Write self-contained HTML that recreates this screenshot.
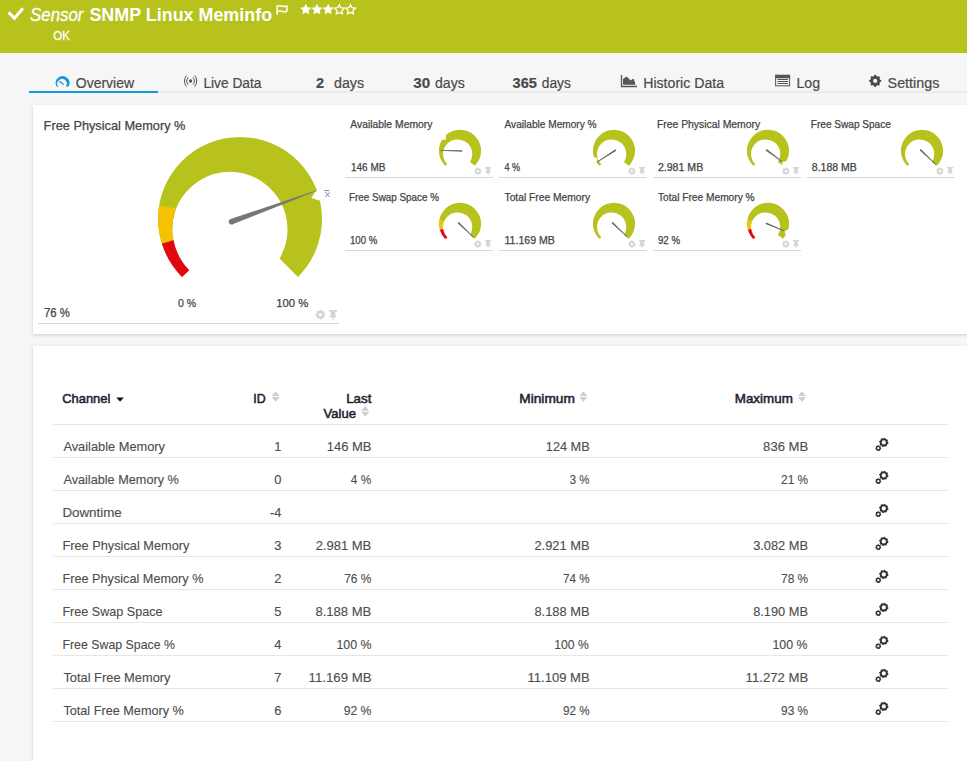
<!DOCTYPE html>
<html><head><meta charset="utf-8">
<style>
html,body{margin:0;padding:0;width:967px;height:761px;overflow:hidden;background:#f6f6f6;font-family:"Liberation Sans",sans-serif;}
.a{position:absolute;white-space:nowrap;line-height:1;}
svg.a{overflow:visible}
.w{color:#fff;}
.tab{color:#4a4a4a;-webkit-text-stroke:0.2px #4a4a4a;}
.panel{position:absolute;background:#fff;box-shadow:0 1px 3px rgba(0,0,0,0.17);}
.g{color:#444;-webkit-text-stroke:0.25px #444;}
.th{color:#1b2230;-webkit-text-stroke:0.5px #1b2230;}
.td{color:#4d4d4d;-webkit-text-stroke:0.12px #4d4d4d;}
.hl{position:absolute;height:1px;}
</style></head><body>

<div class="a" style="left:0;top:0;width:967px;height:53px;background:#b7c21d"></div>
<svg class="a" style="left:0;top:0" width="967" height="52"><path d="M8.6 12.4 L14.5 18.3 L22.9 8.2" stroke="#fff" stroke-width="3" fill="none" stroke-linecap="butt"/><path d="M277.1 5.2 V14.7" stroke="#fff" stroke-width="1.6"/><path d="M277.8 6 C280.5 4.5 282.5 7.8 286.9 6 V11.3 C282.5 13.1 280.5 9.8 277.8 11.3" stroke="#fff" stroke-width="1.5" fill="none"/></svg>
<svg class="a" style="left:0;top:0" width="967" height="52"><polygon points="305.80,3.70 307.50,7.25 311.41,7.78 308.56,10.50 309.27,14.37 305.80,12.50 302.33,14.37 303.04,10.50 300.19,7.78 304.10,7.25" fill="#fff"/><polygon points="316.98,3.70 318.68,7.25 322.59,7.78 319.74,10.50 320.45,14.37 316.98,12.50 313.51,14.37 314.22,10.50 311.37,7.78 315.28,7.25" fill="#fff"/><polygon points="328.16,3.70 329.86,7.25 333.77,7.78 330.92,10.50 331.63,14.37 328.16,12.50 324.69,14.37 325.40,10.50 322.55,7.78 326.46,7.25" fill="#fff"/><polygon points="339.34,4.70 340.87,7.70 344.19,8.22 341.81,10.60 342.34,13.93 339.34,12.40 336.34,13.93 336.87,10.60 334.49,8.22 337.81,7.70" fill="none" stroke="#fff" stroke-width="1.3"/><polygon points="350.52,4.70 352.05,7.70 355.37,8.22 352.99,10.60 353.52,13.93 350.52,12.40 347.52,13.93 348.05,10.60 345.67,8.22 348.99,7.70" fill="none" stroke="#fff" stroke-width="1.3"/></svg>
<div id="t0" class="a w" style="left:31.00px;top:5.86px;font-size:18.6px;font-style:italic;-webkit-text-stroke:0.3px #fff;transform-origin:1.00px 0;transform:translateX(-1.00px) scaleX(0.9051);">Sensor</div>
<div id="t1" class="a w" style="left:90.40px;top:5.70px;font-size:18.9px;font-weight:bold;transform-origin:0.61px 0;transform:translateX(-0.60px) scaleX(0.9476);">SNMP Linux Meminfo</div>
<div id="t2" class="a w" style="left:54.20px;top:29.73px;font-size:12.6px;-webkit-text-stroke:0.3px #fff;transform-origin:0.81px 0;transform:translateX(-0.80px) scaleX(0.9118);">OK</div>
<div class="hl" style="left:29px;top:91px;width:938px;height:2px;background:#ebebeb"></div>
<div class="a" style="left:29px;top:91px;width:129px;height:2px;background:#109ad7"></div>
<div id="t3" class="a tab" style="left:75.80px;top:76.05px;font-size:14px;;transform-origin:0.20px 0;transform:translateX(-0.20px) scaleX(0.9983);">Overview</div>
<div id="t4" class="a tab" style="left:204.40px;top:76.05px;font-size:14px;;transform-origin:0.61px 0;transform:translateX(-0.60px) scaleX(0.9814);">Live Data</div>
<div id="t5" class="a tab" style="left:316.00px;top:76.05px;font-size:14px;font-weight:bold;transform-origin:0.00px 0;transform:translateX(0.00px) scaleX(1.0375);">2</div>
<div id="t6" class="a tab" style="left:334.00px;top:76.05px;font-size:14px;;transform-origin:0.00px 0;transform:translateX(0.00px) scaleX(1.0138);">days</div>
<div id="t7" class="a tab" style="left:413.30px;top:76.05px;font-size:14px;font-weight:bold;transform-origin:-0.30px 0;transform:translateX(0.30px) scaleX(1.0800);">30</div>
<div id="t8" class="a tab" style="left:435.00px;top:76.05px;font-size:14px;;transform-origin:0.00px 0;transform:translateX(0.00px) scaleX(1.0069);">days</div>
<div id="t9" class="a tab" style="left:512.60px;top:76.05px;font-size:14px;font-weight:bold;transform-origin:0.41px 0;transform:translateX(-0.40px) scaleX(1.0391);">365</div>
<div id="t10" class="a tab" style="left:541.80px;top:76.05px;font-size:14px;;transform-origin:0.20px 0;transform:translateX(-0.20px) scaleX(0.9828);">days</div>
<div id="t11" class="a tab" style="left:644.20px;top:76.05px;font-size:14px;;transform-origin:0.81px 0;transform:translateX(-0.80px) scaleX(1.0100);">Historic Data</div>
<div id="t12" class="a tab" style="left:796.50px;top:76.05px;font-size:14px;;transform-origin:0.50px 0;transform:translateX(-0.50px) scaleX(1.0091);">Log</div>
<div id="t13" class="a tab" style="left:887.60px;top:76.05px;font-size:14px;;transform-origin:0.41px 0;transform:translateX(-0.40px) scaleX(1.0220);">Settings</div>
<svg class="a" style="left:0;top:60px" width="967" height="35" viewBox="0 60 967 35"><path d="M56.54 86.50 A7.0 7.0 0 1 1 68.66 86.50 L65.85 86.40 A4.7 4.7 0 1 0 58.40 86.72 Z" fill="#109ad7"/><path d="M59.3 81.2 L63.6 84.6" stroke="#109ad7" stroke-width="1.3"/><circle cx="190.6" cy="81" r="1.7" fill="#555"/><path d="M188.2 77.5 A5.36 5.36 0 0 0 188.2 84.5 M193 77.5 A5.36 5.36 0 0 1 193 84.5" stroke="#555" stroke-width="1" fill="none"/><path d="M186.5 75.5 A8.56 8.56 0 0 0 186.5 86.5 M194.7 75.5 A8.56 8.56 0 0 1 194.7 86.5" stroke="#555" stroke-width="1" fill="none"/><path d="M621.5 75 V86.5 H637" stroke="#555" stroke-width="1.3" fill="none"/><path d="M623 84.7 V79 L626.5 76.4 L630.8 80.6 L633.6 78.4 L635.6 84.7 Z" fill="#555"/><rect x="775.6" y="75.2" width="14" height="10.6" fill="none" stroke="#555" stroke-width="1"/><rect x="775.3" y="75" width="14.6" height="3.3" fill="#555"/><path d="M777.5 79.5 H788 M777.5 81.5 H788 M777.5 83.5 H788" stroke="#555" stroke-width="1"/></svg>
<svg class="a" style="left:0;top:0" width="967" height="761"><path d="M881.27,80.30 L881.27,81.50 L879.89,82.32 L879.52,83.21 L879.91,84.77 L879.07,85.62 L877.51,85.22 L876.62,85.59 L875.80,86.97 L874.60,86.97 L873.78,85.59 L872.89,85.22 L871.33,85.61 L870.48,84.77 L870.88,83.21 L870.51,82.32 L869.13,81.50 L869.13,80.30 L870.51,79.48 L870.88,78.59 L870.49,77.03 L871.33,76.18 L872.89,76.58 L873.78,76.21 L874.60,74.83 L875.80,74.83 L876.62,76.21 L877.51,76.58 L879.07,76.19 L879.92,77.03 L879.52,78.59 L879.89,79.48 Z M877.30,80.90 A2.1,2.1 0 1 0 873.10,80.90 A2.1,2.1 0 1 0 877.30,80.90 Z" fill="#4a4a4a" fill-rule="evenodd"/></svg>
<div class="panel" style="left:33px;top:105px;width:960px;height:229px"></div>
<div id="t14" class="a g" style="left:43.60px;top:119.85px;font-size:12.7px;;transform-origin:0.41px 0;transform:translateX(-0.40px) scaleX(1.0057);">Free Physical Memory %</div>
<div id="t15" class="a g" style="left:43.90px;top:306.93px;font-size:12.6px;;transform-origin:0.11px 0;transform:translateX(-0.10px) scaleX(0.9000);">76 %</div>
<div id="t16" class="a g" style="left:177.90px;top:297.55px;font-size:11.4px;;transform-origin:0.11px 0;transform:translateX(-0.10px) scaleX(0.9250);">0 %</div>
<div id="t17" class="a g" style="left:277.20px;top:297.55px;font-size:11.4px;;transform-origin:0.81px 0;transform:translateX(-0.80px) scaleX(0.9935);">100 %</div>
<div class="hl" style="left:38px;top:323px;width:301px;background:#d8d8d8"></div>
<svg class="a" style="left:0;top:0" width="967" height="761"><path d="M182.02 276.98 A82 82 0 1 1 297.98 276.98 L279.6 258.6 A57.6 57.6 0 1 0 189.2 270.2 Z" fill="#b7c21d"/><path d="M182.02 276.98 A82 82 0 0 1 161.9 243.6 L173.5 240 A57.6 57.6 0 0 0 189.2 270.2 Z" fill="#e30613"/><path d="M161.9 243.6 A82 82 0 0 1 159.2 205.6 L175.6 208.2 A57.6 57.6 0 0 0 173.5 240 Z" fill="#f5c200"/><polygon points="316.8,189.6 311.2,198 321,201 327,198 325,188" fill="#fff"/><polygon points="232.56,224.33 317.09,190.73 316.91,190.27 230.64,219.07" fill="#767676"/><circle cx="231.6" cy="221.7" r="2.8" fill="#767676"/></svg>
<svg class="a" style="left:0;top:0" width="967" height="761"><path d="M324.3 190.6 H329.2 M325.4 192.3 L329.6 197 M329.6 192.3 L325.4 197" stroke="#6f7590" stroke-width="0.9" fill="none"/></svg>
<svg class="a" style="left:0;top:0" width="967" height="761"><path d="M325.38,314.21 L325.38,315.19 L324.23,315.86 L323.93,316.59 L324.26,317.87 L323.57,318.57 L322.28,318.23 L321.56,318.53 L320.89,319.68 L319.91,319.68 L319.24,318.53 L318.51,318.23 L317.23,318.56 L316.53,317.87 L316.87,316.58 L316.57,315.86 L315.42,315.19 L315.42,314.21 L316.57,313.54 L316.87,312.81 L316.54,311.53 L317.23,310.83 L318.52,311.17 L319.24,310.87 L319.91,309.72 L320.89,309.72 L321.56,310.87 L322.29,311.17 L323.57,310.84 L324.27,311.53 L323.93,312.82 L324.23,313.54 Z M322.00,314.70 A1.6,1.6 0 1 0 318.80,314.70 A1.6,1.6 0 1 0 322.00,314.70 Z" fill="#d5d5d5" fill-rule="evenodd"/><path d="M329.20 310.10 H336.80 V312.02 H335.28 V315.38 L336.80 317.40 H329.20 L330.72 315.38 V312.02 H329.20 Z M332.39 317.40 H333.61 V319.70 H332.39 Z" fill="#d5d5d5"/></svg>
<div id="t18" class="a g" style="left:350.30px;top:119.80px;font-size:10.4px;;transform-origin:-0.30px 0;transform:translateX(0.30px) scaleX(0.9964);">Available Memory</div>
<div id="t19" class="a g" style="left:350.80px;top:163.07px;font-size:10.2px;;transform-origin:0.20px 0;transform:translateX(-0.10px) scaleX(0.9829);">146 MB</div>
<div class="hl" style="left:345px;top:177px;width:148px;background:#d8d8d8"></div>
<div id="t20" class="a g" style="left:504.30px;top:119.80px;font-size:10.4px;;transform-origin:-0.30px 0;transform:translateX(0.50px) scaleX(0.9747);">Available Memory %</div>
<div id="t21" class="a g" style="left:504.80px;top:163.07px;font-size:10.2px;;transform-origin:0.20px 0;transform:translateX(-0.50px) scaleX(0.8941);">4 %</div>
<div class="hl" style="left:499px;top:177px;width:148px;background:#d8d8d8"></div>
<div id="t22" class="a g" style="left:658.30px;top:119.80px;font-size:10.4px;;transform-origin:0.70px 0;transform:translateX(-1.10px) scaleX(0.9990);">Free Physical Memory</div>
<div id="t23" class="a g" style="left:658.80px;top:163.07px;font-size:10.2px;;transform-origin:0.20px 0;transform:translateX(-1.10px) scaleX(1.0395);">2.981 MB</div>
<div class="hl" style="left:653px;top:177px;width:148px;background:#d8d8d8"></div>
<div id="t24" class="a g" style="left:812.30px;top:119.80px;font-size:10.4px;;transform-origin:0.70px 0;transform:translateX(-1.20px) scaleX(0.9683);">Free Swap Space</div>
<div id="t25" class="a g" style="left:812.80px;top:163.07px;font-size:10.2px;;transform-origin:0.20px 0;transform:translateX(-1.20px) scaleX(1.0302);">8.188 MB</div>
<div class="hl" style="left:807px;top:177px;width:148px;background:#d8d8d8"></div>
<div id="t26" class="a g" style="left:350.30px;top:192.80px;font-size:10.4px;;transform-origin:0.70px 0;transform:translateX(-1.00px) scaleX(0.9500);">Free Swap Space %</div>
<div id="t27" class="a g" style="left:350.80px;top:236.07px;font-size:10.2px;;transform-origin:0.20px 0;transform:translateX(-1.00px) scaleX(0.9448);">100 %</div>
<div class="hl" style="left:345px;top:250px;width:148px;background:#d8d8d8"></div>
<div id="t28" class="a g" style="left:504.30px;top:192.80px;font-size:10.4px;;transform-origin:-0.30px 0;transform:translateX(0.50px) scaleX(0.9885);">Total Free Memory</div>
<div id="t29" class="a g" style="left:504.80px;top:236.07px;font-size:10.2px;;transform-origin:0.20px 0;transform:translateX(-0.50px) scaleX(1.0396);">11.169 MB</div>
<div class="hl" style="left:499px;top:250px;width:148px;background:#d8d8d8"></div>
<div id="t30" class="a g" style="left:658.30px;top:192.80px;font-size:10.4px;;transform-origin:-0.30px 0;transform:translateX(-0.10px) scaleX(0.9798);">Total Free Memory %</div>
<div id="t31" class="a g" style="left:658.80px;top:236.07px;font-size:10.2px;;transform-origin:0.20px 0;transform:translateX(-1.10px) scaleX(0.9522);">92 %</div>
<div class="hl" style="left:653px;top:250px;width:148px;background:#d8d8d8"></div>
<svg class="a" style="left:0;top:0" width="967" height="761"><path d="M445.08 165.72 A21.1 21.1 0 1 1 474.92 165.72 L469.90 161.90 A14.6 14.6 0 1 0 447.40 164.40 Z" fill="#b7c21d"/><polygon points="462.23,150.15 440.51,149.95 440.49,150.65 462.17,151.85" fill="#666"/><polygon points="446.09,139.54 441.47,140.10 439.13,138.75 443.87,132.89 445.68,134.90" fill="#fff"/><path d="M481.68,170.73 L481.68,171.47 L480.81,171.98 L480.58,172.53 L480.84,173.51 L480.31,174.04 L479.33,173.78 L478.78,174.01 L478.27,174.88 L477.53,174.88 L477.02,174.01 L476.47,173.78 L475.49,174.04 L474.96,173.51 L475.22,172.53 L474.99,171.98 L474.12,171.47 L474.12,170.73 L474.99,170.22 L475.22,169.67 L474.96,168.69 L475.49,168.16 L476.47,168.42 L477.02,168.19 L477.53,167.32 L478.27,167.32 L478.78,168.19 L479.33,168.42 L480.31,168.16 L480.84,168.69 L480.58,169.67 L480.81,170.22 Z M479.12,171.10 A1.216,1.216 0 1 0 476.68,171.10 A1.216,1.216 0 1 0 479.12,171.10 Z" fill="#d5d5d5" fill-rule="evenodd"/><path d="M485.00 167.00 H491.10 V168.60 H489.88 V171.40 L491.10 173.08 H485.00 L486.22 171.40 V168.60 H485.00 Z M487.56 173.08 H488.54 V175.00 H487.56 Z" fill="#d5d5d5"/><path d="M599.08 165.72 A21.1 21.1 0 1 1 628.92 165.72 L623.90 161.90 A14.6 14.6 0 1 0 601.40 164.40 Z" fill="#b7c21d"/><polygon points="615.34,149.29 597.21,161.61 597.59,162.19 616.26,150.71" fill="#666"/><polygon points="597.78,158.36 596.26,162.77 594.02,164.28 590.83,157.44 593.43,156.70" fill="#fff"/><path d="M635.68,170.73 L635.68,171.47 L634.81,171.98 L634.58,172.53 L634.84,173.51 L634.31,174.04 L633.33,173.78 L632.78,174.01 L632.27,174.88 L631.53,174.88 L631.02,174.01 L630.47,173.78 L629.49,174.04 L628.96,173.51 L629.22,172.53 L628.99,171.98 L628.12,171.47 L628.12,170.73 L628.99,170.22 L629.22,169.67 L628.96,168.69 L629.49,168.16 L630.47,168.42 L631.02,168.19 L631.53,167.32 L632.27,167.32 L632.78,168.19 L633.33,168.42 L634.31,168.16 L634.84,168.69 L634.58,169.67 L634.81,170.22 Z M633.12,171.10 A1.216,1.216 0 1 0 630.68,171.10 A1.216,1.216 0 1 0 633.12,171.10 Z" fill="#d5d5d5" fill-rule="evenodd"/><path d="M639.00 167.00 H645.10 V168.60 H643.88 V171.40 L645.10 173.08 H639.00 L640.22 171.40 V168.60 H639.00 Z M641.56 173.08 H642.54 V175.00 H641.56 Z" fill="#d5d5d5"/><path d="M753.08 165.72 A21.1 21.1 0 1 1 782.92 165.72 L777.90 161.90 A14.6 14.6 0 1 0 755.40 164.40 Z" fill="#b7c21d"/><polygon points="765.69,150.38 783.69,163.28 784.11,162.72 766.71,149.02" fill="#666"/><polygon points="782.11,161.82 786.72,161.17 789.08,162.48 784.44,168.43 782.59,166.45" fill="#fff"/><path d="M789.68,170.73 L789.68,171.47 L788.81,171.98 L788.58,172.53 L788.84,173.51 L788.31,174.04 L787.33,173.78 L786.78,174.01 L786.27,174.88 L785.53,174.88 L785.02,174.01 L784.47,173.78 L783.49,174.04 L782.96,173.51 L783.22,172.53 L782.99,171.98 L782.12,171.47 L782.12,170.73 L782.99,170.22 L783.22,169.67 L782.96,168.69 L783.49,168.16 L784.47,168.42 L785.02,168.19 L785.53,167.32 L786.27,167.32 L786.78,168.19 L787.33,168.42 L788.31,168.16 L788.84,168.69 L788.58,169.67 L788.81,170.22 Z M787.12,171.10 A1.216,1.216 0 1 0 784.68,171.10 A1.216,1.216 0 1 0 787.12,171.10 Z" fill="#d5d5d5" fill-rule="evenodd"/><path d="M793.00 167.00 H799.10 V168.60 H797.88 V171.40 L799.10 173.08 H793.00 L794.22 171.40 V168.60 H793.00 Z M795.56 173.08 H796.54 V175.00 H795.56 Z" fill="#d5d5d5"/><path d="M907.08 165.72 A21.1 21.1 0 1 1 936.92 165.72 L931.90 161.90 A14.6 14.6 0 1 0 909.40 164.40 Z" fill="#b7c21d"/><polygon points="919.61,150.32 935.86,165.05 936.34,164.55 920.79,149.08" fill="#666"/><path d="M943.68,170.73 L943.68,171.47 L942.81,171.98 L942.58,172.53 L942.84,173.51 L942.31,174.04 L941.33,173.78 L940.78,174.01 L940.27,174.88 L939.53,174.88 L939.02,174.01 L938.47,173.78 L937.49,174.04 L936.96,173.51 L937.22,172.53 L936.99,171.98 L936.12,171.47 L936.12,170.73 L936.99,170.22 L937.22,169.67 L936.96,168.69 L937.49,168.16 L938.47,168.42 L939.02,168.19 L939.53,167.32 L940.27,167.32 L940.78,168.19 L941.33,168.42 L942.31,168.16 L942.84,168.69 L942.58,169.67 L942.81,170.22 Z M941.12,171.10 A1.216,1.216 0 1 0 938.68,171.10 A1.216,1.216 0 1 0 941.12,171.10 Z" fill="#d5d5d5" fill-rule="evenodd"/><path d="M947.00 167.00 H953.10 V168.60 H951.88 V171.40 L953.10 173.08 H947.00 L948.22 171.40 V168.60 H947.00 Z M949.56 173.08 H950.54 V175.00 H949.56 Z" fill="#d5d5d5"/><path d="M445.08 238.72 A21.1 21.1 0 1 1 474.92 238.72 L469.90 234.90 A14.6 14.6 0 1 0 447.40 237.40 Z" fill="#b7c21d"/><path d="M438.90 220.40 A21.1 21.1 0 0 0 445.20 238.90 L447.40 237.40 A17 17 0 0 1 443.40 221.30 Z" fill="#fff"/><path d="M438.90 220.40 A21.1 21.1 0 0 0 439.80 229.80 L443.00 228.90 A17 17 0 0 1 443.40 221.30 Z" fill="#f5c200"/><path d="M439.80 229.80 A21.1 21.1 0 0 0 445.20 238.90 L447.40 237.40 A17 17 0 0 1 443.00 228.90 Z" fill="#e30613"/><polygon points="457.61,223.31 473.56,237.85 474.04,237.35 458.79,222.09" fill="#666"/><path d="M481.68,243.73 L481.68,244.47 L480.81,244.98 L480.58,245.53 L480.84,246.51 L480.31,247.04 L479.33,246.78 L478.78,247.01 L478.27,247.88 L477.53,247.88 L477.02,247.01 L476.47,246.78 L475.49,247.04 L474.96,246.51 L475.22,245.53 L474.99,244.98 L474.12,244.47 L474.12,243.73 L474.99,243.22 L475.22,242.67 L474.96,241.69 L475.49,241.16 L476.47,241.42 L477.02,241.19 L477.53,240.32 L478.27,240.32 L478.78,241.19 L479.33,241.42 L480.31,241.16 L480.84,241.69 L480.58,242.67 L480.81,243.22 Z M479.12,244.10 A1.216,1.216 0 1 0 476.68,244.10 A1.216,1.216 0 1 0 479.12,244.10 Z" fill="#d5d5d5" fill-rule="evenodd"/><path d="M485.00 240.00 H491.10 V241.60 H489.88 V244.40 L491.10 246.08 H485.00 L486.22 244.40 V241.60 H485.00 Z M487.56 246.08 H488.54 V248.00 H487.56 Z" fill="#d5d5d5"/><path d="M599.08 238.72 A21.1 21.1 0 1 1 628.92 238.72 L623.90 234.90 A14.6 14.6 0 1 0 601.40 237.40 Z" fill="#b7c21d"/><polygon points="611.62,223.32 627.16,237.25 627.64,236.75 612.78,222.08" fill="#666"/><path d="M635.68,243.73 L635.68,244.47 L634.81,244.98 L634.58,245.53 L634.84,246.51 L634.31,247.04 L633.33,246.78 L632.78,247.01 L632.27,247.88 L631.53,247.88 L631.02,247.01 L630.47,246.78 L629.49,247.04 L628.96,246.51 L629.22,245.53 L628.99,244.98 L628.12,244.47 L628.12,243.73 L628.99,243.22 L629.22,242.67 L628.96,241.69 L629.49,241.16 L630.47,241.42 L631.02,241.19 L631.53,240.32 L632.27,240.32 L632.78,241.19 L633.33,241.42 L634.31,241.16 L634.84,241.69 L634.58,242.67 L634.81,243.22 Z M633.12,244.10 A1.216,1.216 0 1 0 630.68,244.10 A1.216,1.216 0 1 0 633.12,244.10 Z" fill="#d5d5d5" fill-rule="evenodd"/><path d="M639.00 240.00 H645.10 V241.60 H643.88 V244.40 L645.10 246.08 H639.00 L640.22 244.40 V241.60 H639.00 Z M641.56 246.08 H642.54 V248.00 H641.56 Z" fill="#d5d5d5"/><path d="M753.08 238.72 A21.1 21.1 0 1 1 782.92 238.72 L777.90 234.90 A14.6 14.6 0 1 0 755.40 237.40 Z" fill="#b7c21d"/><path d="M746.90 220.40 A21.1 21.1 0 0 0 753.20 238.90 L755.40 237.40 A17 17 0 0 1 751.40 221.30 Z" fill="#fff"/><path d="M746.90 220.40 A21.1 21.1 0 0 0 747.80 229.80 L751.00 228.90 A17 17 0 0 1 751.40 221.30 Z" fill="#f5c200"/><path d="M747.80 229.80 A21.1 21.1 0 0 0 753.20 238.90 L755.40 237.40 A17 17 0 0 1 751.00 228.90 Z" fill="#e30613"/><polygon points="765.58,224.09 785.97,231.92 786.23,231.28 766.22,222.51" fill="#666"/><polygon points="784.35,231.08 788.67,229.34 791.28,230.04 788.21,236.93 785.95,235.46" fill="#fff"/><path d="M789.68,243.73 L789.68,244.47 L788.81,244.98 L788.58,245.53 L788.84,246.51 L788.31,247.04 L787.33,246.78 L786.78,247.01 L786.27,247.88 L785.53,247.88 L785.02,247.01 L784.47,246.78 L783.49,247.04 L782.96,246.51 L783.22,245.53 L782.99,244.98 L782.12,244.47 L782.12,243.73 L782.99,243.22 L783.22,242.67 L782.96,241.69 L783.49,241.16 L784.47,241.42 L785.02,241.19 L785.53,240.32 L786.27,240.32 L786.78,241.19 L787.33,241.42 L788.31,241.16 L788.84,241.69 L788.58,242.67 L788.81,243.22 Z M787.12,244.10 A1.216,1.216 0 1 0 784.68,244.10 A1.216,1.216 0 1 0 787.12,244.10 Z" fill="#d5d5d5" fill-rule="evenodd"/><path d="M793.00 240.00 H799.10 V241.60 H797.88 V244.40 L799.10 246.08 H793.00 L794.22 244.40 V241.60 H793.00 Z M795.56 246.08 H796.54 V248.00 H795.56 Z" fill="#d5d5d5"/></svg>
<div class="panel" style="left:33px;top:346px;width:960px;height:440px"></div>
<div id="t32" class="a th" style="left:63.30px;top:393.03px;font-size:12.6px;;transform-origin:0.70px 0;transform:translateX(-0.70px) scaleX(1.0239);">Channel</div>
<div id="t33" class="a th" style="right:701.00px;top:393.03px;font-size:12.6px;;transform-origin:0.59px 0;transform:translateX(0.20px) scaleX(0.9833);">ID</div>
<div id="t34" class="a th" style="right:595.30px;top:393.03px;font-size:12.6px;;transform-origin:1.11px 0;transform:translateX(-1.80px) scaleX(1.0652);">Last</div>
<div id="t35" class="a th" style="right:611.40px;top:407.63px;font-size:12.6px;;transform-origin:-0.33px 0;transform:translateX(-0.50px) scaleX(1.0355);">Value</div>
<div id="t36" class="a th" style="right:393.30px;top:393.03px;font-size:12.6px;;transform-origin:0.38px 0;transform:translateX(-3.70px) scaleX(1.0880);">Minimum</div>
<div id="t37" class="a th" style="right:174.80px;top:393.03px;font-size:12.6px;;transform-origin:0.38px 0;transform:translateX(-3.20px) scaleX(1.0630);">Maximum</div>
<div class="hl" style="left:53px;top:424px;width:895px;background:#e6e6e6"></div>
<div id="t38" class="a td" style="left:63.30px;top:440.58px;font-size:12.9px;;transform-origin:-0.30px 0;transform:translateX(0.40px) scaleX(0.9942);">Available Memory</div>
<div id="t39" class="a td" style="right:685.50px;top:440.58px;font-size:12.9px;;">1</div>
<div id="t40" class="a td" style="right:595.40px;top:440.58px;font-size:12.9px;;transform-origin:0.83px 0;transform:translateX(-0.30px) scaleX(1.0093);">146 MB</div>
<div id="t41" class="a td" style="right:377.00px;top:440.58px;font-size:12.9px;;transform-origin:0.44px 0;transform:translateX(-0.20px) scaleX(0.9886);">124 MB</div>
<div id="t42" class="a td" style="right:159.00px;top:440.58px;font-size:12.9px;;transform-origin:0.44px 0;transform:translateX(-0.90px) scaleX(1.0159);">836 MB</div>
<div class="hl" style="left:53px;top:457px;width:895px;background:#e6e6e6"></div>
<div id="t43" class="a td" style="left:63.30px;top:473.58px;font-size:12.9px;;transform-origin:-0.30px 0;transform:translateX(0.40px) scaleX(0.9846);">Available Memory %</div>
<div id="t44" class="a td" style="right:685.50px;top:473.58px;font-size:12.9px;;">0</div>
<div id="t45" class="a td" style="right:595.40px;top:473.58px;font-size:12.9px;;transform-origin:0.61px 0;transform:translateX(1.80px) scaleX(0.9190);">4 %</div>
<div id="t46" class="a td" style="right:377.00px;top:473.58px;font-size:12.9px;;transform-origin:0.22px 0;transform:translateX(1.80px) scaleX(0.8864);">3 %</div>
<div id="t47" class="a td" style="right:159.00px;top:473.58px;font-size:12.9px;;transform-origin:0.39px 0;transform:translateX(2.00px) scaleX(0.9241);">21 %</div>
<div class="hl" style="left:53px;top:490px;width:895px;background:#e6e6e6"></div>
<div id="t48" class="a td" style="left:63.30px;top:506.58px;font-size:12.9px;;transform-origin:0.70px 0;transform:translateX(-0.60px) scaleX(1.0357);">Downtime</div>
<div id="t49" class="a td" style="right:685.50px;top:506.58px;font-size:12.9px;;">-4</div>
<div class="hl" style="left:53px;top:523px;width:895px;background:#e6e6e6"></div>
<div id="t50" class="a td" style="left:63.30px;top:539.58px;font-size:12.9px;;transform-origin:0.70px 0;transform:translateX(-0.60px) scaleX(0.9906);">Free Physical Memory</div>
<div id="t51" class="a td" style="right:685.50px;top:539.58px;font-size:12.9px;;">3</div>
<div id="t52" class="a td" style="right:595.40px;top:539.58px;font-size:12.9px;;transform-origin:0.58px 0;transform:translateX(-0.30px) scaleX(1.0074);">2.981 MB</div>
<div id="t53" class="a td" style="right:377.00px;top:539.58px;font-size:12.9px;;transform-origin:0.19px 0;transform:translateX(-0.60px) scaleX(0.9982);">2.921 MB</div>
<div id="t54" class="a td" style="right:159.00px;top:539.58px;font-size:12.9px;;transform-origin:0.19px 0;transform:translateX(0.20px) scaleX(0.9927);">3.082 MB</div>
<div class="hl" style="left:53px;top:556px;width:895px;background:#e6e6e6"></div>
<div id="t55" class="a td" style="left:63.30px;top:572.58px;font-size:12.9px;;transform-origin:0.70px 0;transform:translateX(-0.60px) scaleX(0.9845);">Free Physical Memory %</div>
<div id="t56" class="a td" style="right:685.50px;top:572.58px;font-size:12.9px;;">2</div>
<div id="t57" class="a td" style="right:595.40px;top:572.58px;font-size:12.9px;;transform-origin:0.78px 0;transform:translateX(2.10px) scaleX(0.9286);">76 %</div>
<div id="t58" class="a td" style="right:377.00px;top:572.58px;font-size:12.9px;;transform-origin:0.39px 0;transform:translateX(2.00px) scaleX(0.9069);">74 %</div>
<div id="t59" class="a td" style="right:159.00px;top:572.58px;font-size:12.9px;;transform-origin:0.39px 0;transform:translateX(2.00px) scaleX(0.9241);">78 %</div>
<div class="hl" style="left:53px;top:589px;width:895px;background:#e6e6e6"></div>
<div id="t60" class="a td" style="left:63.30px;top:605.58px;font-size:12.9px;;transform-origin:0.70px 0;transform:translateX(-0.60px) scaleX(0.9772);">Free Swap Space</div>
<div id="t61" class="a td" style="right:685.50px;top:605.58px;font-size:12.9px;;">5</div>
<div id="t62" class="a td" style="right:595.40px;top:605.58px;font-size:12.9px;;transform-origin:0.58px 0;transform:translateX(-0.60px) scaleX(1.0130);">8.188 MB</div>
<div id="t63" class="a td" style="right:377.00px;top:605.58px;font-size:12.9px;;transform-origin:0.19px 0;transform:translateX(-0.60px) scaleX(0.9982);">8.188 MB</div>
<div id="t64" class="a td" style="right:159.00px;top:605.58px;font-size:12.9px;;transform-origin:0.19px 0;transform:translateX(0.20px) scaleX(0.9927);">8.190 MB</div>
<div class="hl" style="left:53px;top:622px;width:895px;background:#e6e6e6"></div>
<div id="t65" class="a td" style="left:63.30px;top:638.58px;font-size:12.9px;;transform-origin:0.70px 0;transform:translateX(-0.60px) scaleX(0.9578);">Free Swap Space %</div>
<div id="t66" class="a td" style="right:685.50px;top:638.58px;font-size:12.9px;;">4</div>
<div id="t67" class="a td" style="right:595.40px;top:638.58px;font-size:12.9px;;transform-origin:0.95px 0;transform:translateX(1.40px) scaleX(0.9629);">100 %</div>
<div id="t68" class="a td" style="right:377.00px;top:638.58px;font-size:12.9px;;transform-origin:0.56px 0;transform:translateX(1.30px) scaleX(0.9444);">100 %</div>
<div id="t69" class="a td" style="right:159.00px;top:638.58px;font-size:12.9px;;transform-origin:0.56px 0;transform:translateX(1.40px) scaleX(0.9556);">100 %</div>
<div class="hl" style="left:53px;top:655px;width:895px;background:#e6e6e6"></div>
<div id="t70" class="a td" style="left:63.30px;top:671.58px;font-size:12.9px;;transform-origin:-0.30px 0;transform:translateX(0.40px) scaleX(0.9972);">Total Free Memory</div>
<div id="t71" class="a td" style="right:685.50px;top:671.58px;font-size:12.9px;;">7</div>
<div id="t72" class="a td" style="right:595.40px;top:671.58px;font-size:12.9px;;transform-origin:0.78px 0;transform:translateX(-1.40px) scaleX(1.0250);">11.169 MB</div>
<div id="t73" class="a td" style="right:377.00px;top:671.58px;font-size:12.9px;;transform-origin:0.39px 0;transform:translateX(-1.50px) scaleX(1.0131);">11.109 MB</div>
<div id="t74" class="a td" style="right:159.00px;top:671.58px;font-size:12.9px;;transform-origin:0.39px 0;transform:translateX(-1.40px) scaleX(1.0197);">11.272 MB</div>
<div class="hl" style="left:53px;top:688px;width:895px;background:#e6e6e6"></div>
<div id="t75" class="a td" style="left:63.30px;top:704.58px;font-size:12.9px;;transform-origin:-0.30px 0;transform:translateX(0.40px) scaleX(0.9836);">Total Free Memory %</div>
<div id="t76" class="a td" style="right:685.50px;top:704.58px;font-size:12.9px;;">6</div>
<div id="t77" class="a td" style="right:595.40px;top:704.58px;font-size:12.9px;;transform-origin:0.78px 0;transform:translateX(1.60px) scaleX(0.9464);">92 %</div>
<div id="t78" class="a td" style="right:377.00px;top:704.58px;font-size:12.9px;;transform-origin:0.39px 0;transform:translateX(2.00px) scaleX(0.9069);">92 %</div>
<div id="t79" class="a td" style="right:159.00px;top:704.58px;font-size:12.9px;;transform-origin:0.39px 0;transform:translateX(2.00px) scaleX(0.9241);">93 %</div>
<div class="hl" style="left:53px;top:721px;width:895px;background:#e6e6e6"></div>
<svg class="a" style="left:0;top:0" width="967" height="761"><path d="M116.3 397.6 H123.8 L120.05 401.7 Z" fill="#0b1020"/><path d="M271.70 396.00 L275.65 391.20 L279.60 396.00 Z M271.70 397.00 H279.60 L275.65 402.00 Z" fill="#cfcfcf"/><path d="M361.30 410.80 L365.25 406.00 L369.20 410.80 Z M361.30 411.80 H369.20 L365.25 416.80 Z" fill="#cfcfcf"/><path d="M579.50 396.00 L583.45 391.20 L587.40 396.00 Z M579.50 397.00 H587.40 L583.45 402.00 Z" fill="#cfcfcf"/><path d="M798.00 396.00 L801.95 391.20 L805.90 396.00 Z M798.00 397.00 H805.90 L801.95 402.00 Z" fill="#cfcfcf"/><path d="M888.48,442.87 L888.30,443.77 L887.32,444.29 L886.89,444.94 L886.78,446.04 L886.01,446.55 L884.95,446.23 L884.18,446.38 L883.33,447.08 L882.43,446.90 L881.91,445.92 L881.26,445.49 L880.16,445.38 L879.65,444.61 L879.97,443.55 L879.82,442.78 L879.12,441.93 L879.30,441.03 L880.28,440.51 L880.71,439.86 L880.82,438.76 L881.59,438.25 L882.65,438.57 L883.42,438.42 L884.27,437.72 L885.17,437.90 L885.69,438.88 L886.34,439.31 L887.44,439.42 L887.95,440.19 L887.63,441.25 L887.78,442.02 Z M885.90,442.40 A2.1,2.1 0 1 0 881.70,442.40 A2.1,2.1 0 1 0 885.90,442.40 Z" fill="#333" fill-rule="evenodd"/><path d="M881.29,448.50 L881.14,449.16 L880.43,449.50 L880.09,449.95 L879.93,450.72 L879.33,451.02 L878.61,450.68 L878.05,450.69 L877.34,451.04 L876.74,450.76 L876.55,449.99 L876.20,449.56 L875.48,449.23 L875.32,448.57 L875.81,447.95 L875.93,447.40 L875.74,446.64 L876.15,446.10 L876.94,446.10 L877.45,445.85 L877.93,445.22 L878.60,445.21 L879.10,445.83 L879.60,446.07 L880.40,446.05 L880.82,446.57 L880.65,447.35 L880.78,447.89 Z M879.40,448.20 A1.1,1.1 0 1 0 877.20,448.20 A1.1,1.1 0 1 0 879.40,448.20 Z" fill="#333" fill-rule="evenodd"/><path d="M888.48,475.87 L888.30,476.77 L887.32,477.29 L886.89,477.94 L886.78,479.04 L886.01,479.55 L884.95,479.23 L884.18,479.38 L883.33,480.08 L882.43,479.90 L881.91,478.92 L881.26,478.49 L880.16,478.38 L879.65,477.61 L879.97,476.55 L879.82,475.78 L879.12,474.93 L879.30,474.03 L880.28,473.51 L880.71,472.86 L880.82,471.76 L881.59,471.25 L882.65,471.57 L883.42,471.42 L884.27,470.72 L885.17,470.90 L885.69,471.88 L886.34,472.31 L887.44,472.42 L887.95,473.19 L887.63,474.25 L887.78,475.02 Z M885.90,475.40 A2.1,2.1 0 1 0 881.70,475.40 A2.1,2.1 0 1 0 885.90,475.40 Z" fill="#333" fill-rule="evenodd"/><path d="M881.29,481.50 L881.14,482.16 L880.43,482.50 L880.09,482.95 L879.93,483.72 L879.33,484.02 L878.61,483.68 L878.05,483.69 L877.34,484.04 L876.74,483.76 L876.55,482.99 L876.20,482.56 L875.48,482.23 L875.32,481.57 L875.81,480.95 L875.93,480.40 L875.74,479.64 L876.15,479.10 L876.94,479.10 L877.45,478.85 L877.93,478.22 L878.60,478.21 L879.10,478.83 L879.60,479.07 L880.40,479.05 L880.82,479.57 L880.65,480.35 L880.78,480.89 Z M879.40,481.20 A1.1,1.1 0 1 0 877.20,481.20 A1.1,1.1 0 1 0 879.40,481.20 Z" fill="#333" fill-rule="evenodd"/><path d="M888.48,508.87 L888.30,509.77 L887.32,510.29 L886.89,510.94 L886.78,512.04 L886.01,512.55 L884.95,512.23 L884.18,512.38 L883.33,513.08 L882.43,512.90 L881.91,511.92 L881.26,511.49 L880.16,511.38 L879.65,510.61 L879.97,509.55 L879.82,508.78 L879.12,507.93 L879.30,507.03 L880.28,506.51 L880.71,505.86 L880.82,504.76 L881.59,504.25 L882.65,504.57 L883.42,504.42 L884.27,503.72 L885.17,503.90 L885.69,504.88 L886.34,505.31 L887.44,505.42 L887.95,506.19 L887.63,507.25 L887.78,508.02 Z M885.90,508.40 A2.1,2.1 0 1 0 881.70,508.40 A2.1,2.1 0 1 0 885.90,508.40 Z" fill="#333" fill-rule="evenodd"/><path d="M881.29,514.50 L881.14,515.16 L880.43,515.50 L880.09,515.95 L879.93,516.72 L879.33,517.02 L878.61,516.68 L878.05,516.69 L877.34,517.04 L876.74,516.76 L876.55,515.99 L876.20,515.56 L875.48,515.23 L875.32,514.57 L875.81,513.95 L875.93,513.40 L875.74,512.64 L876.15,512.10 L876.94,512.10 L877.45,511.85 L877.93,511.22 L878.60,511.21 L879.10,511.83 L879.60,512.07 L880.40,512.05 L880.82,512.57 L880.65,513.35 L880.78,513.89 Z M879.40,514.20 A1.1,1.1 0 1 0 877.20,514.20 A1.1,1.1 0 1 0 879.40,514.20 Z" fill="#333" fill-rule="evenodd"/><path d="M888.48,541.87 L888.30,542.77 L887.32,543.29 L886.89,543.94 L886.78,545.04 L886.01,545.55 L884.95,545.23 L884.18,545.38 L883.33,546.08 L882.43,545.90 L881.91,544.92 L881.26,544.49 L880.16,544.38 L879.65,543.61 L879.97,542.55 L879.82,541.78 L879.12,540.93 L879.30,540.03 L880.28,539.51 L880.71,538.86 L880.82,537.76 L881.59,537.25 L882.65,537.57 L883.42,537.42 L884.27,536.72 L885.17,536.90 L885.69,537.88 L886.34,538.31 L887.44,538.42 L887.95,539.19 L887.63,540.25 L887.78,541.02 Z M885.90,541.40 A2.1,2.1 0 1 0 881.70,541.40 A2.1,2.1 0 1 0 885.90,541.40 Z" fill="#333" fill-rule="evenodd"/><path d="M881.29,547.50 L881.14,548.16 L880.43,548.50 L880.09,548.95 L879.93,549.72 L879.33,550.02 L878.61,549.68 L878.05,549.69 L877.34,550.04 L876.74,549.76 L876.55,548.99 L876.20,548.56 L875.48,548.23 L875.32,547.57 L875.81,546.95 L875.93,546.40 L875.74,545.64 L876.15,545.10 L876.94,545.10 L877.45,544.85 L877.93,544.22 L878.60,544.21 L879.10,544.83 L879.60,545.07 L880.40,545.05 L880.82,545.57 L880.65,546.35 L880.78,546.89 Z M879.40,547.20 A1.1,1.1 0 1 0 877.20,547.20 A1.1,1.1 0 1 0 879.40,547.20 Z" fill="#333" fill-rule="evenodd"/><path d="M888.48,574.87 L888.30,575.77 L887.32,576.29 L886.89,576.94 L886.78,578.04 L886.01,578.55 L884.95,578.23 L884.18,578.38 L883.33,579.08 L882.43,578.90 L881.91,577.92 L881.26,577.49 L880.16,577.38 L879.65,576.61 L879.97,575.55 L879.82,574.78 L879.12,573.93 L879.30,573.03 L880.28,572.51 L880.71,571.86 L880.82,570.76 L881.59,570.25 L882.65,570.57 L883.42,570.42 L884.27,569.72 L885.17,569.90 L885.69,570.88 L886.34,571.31 L887.44,571.42 L887.95,572.19 L887.63,573.25 L887.78,574.02 Z M885.90,574.40 A2.1,2.1 0 1 0 881.70,574.40 A2.1,2.1 0 1 0 885.90,574.40 Z" fill="#333" fill-rule="evenodd"/><path d="M881.29,580.50 L881.14,581.16 L880.43,581.50 L880.09,581.95 L879.93,582.72 L879.33,583.02 L878.61,582.68 L878.05,582.69 L877.34,583.04 L876.74,582.76 L876.55,581.99 L876.20,581.56 L875.48,581.23 L875.32,580.57 L875.81,579.95 L875.93,579.40 L875.74,578.64 L876.15,578.10 L876.94,578.10 L877.45,577.85 L877.93,577.22 L878.60,577.21 L879.10,577.83 L879.60,578.07 L880.40,578.05 L880.82,578.57 L880.65,579.35 L880.78,579.89 Z M879.40,580.20 A1.1,1.1 0 1 0 877.20,580.20 A1.1,1.1 0 1 0 879.40,580.20 Z" fill="#333" fill-rule="evenodd"/><path d="M888.48,607.87 L888.30,608.77 L887.32,609.29 L886.89,609.94 L886.78,611.04 L886.01,611.55 L884.95,611.23 L884.18,611.38 L883.33,612.08 L882.43,611.90 L881.91,610.92 L881.26,610.49 L880.16,610.38 L879.65,609.61 L879.97,608.55 L879.82,607.78 L879.12,606.93 L879.30,606.03 L880.28,605.51 L880.71,604.86 L880.82,603.76 L881.59,603.25 L882.65,603.57 L883.42,603.42 L884.27,602.72 L885.17,602.90 L885.69,603.88 L886.34,604.31 L887.44,604.42 L887.95,605.19 L887.63,606.25 L887.78,607.02 Z M885.90,607.40 A2.1,2.1 0 1 0 881.70,607.40 A2.1,2.1 0 1 0 885.90,607.40 Z" fill="#333" fill-rule="evenodd"/><path d="M881.29,613.50 L881.14,614.16 L880.43,614.50 L880.09,614.95 L879.93,615.72 L879.33,616.02 L878.61,615.68 L878.05,615.69 L877.34,616.04 L876.74,615.76 L876.55,614.99 L876.20,614.56 L875.48,614.23 L875.32,613.57 L875.81,612.95 L875.93,612.40 L875.74,611.64 L876.15,611.10 L876.94,611.10 L877.45,610.85 L877.93,610.22 L878.60,610.21 L879.10,610.83 L879.60,611.07 L880.40,611.05 L880.82,611.57 L880.65,612.35 L880.78,612.89 Z M879.40,613.20 A1.1,1.1 0 1 0 877.20,613.20 A1.1,1.1 0 1 0 879.40,613.20 Z" fill="#333" fill-rule="evenodd"/><path d="M888.48,640.87 L888.30,641.77 L887.32,642.29 L886.89,642.94 L886.78,644.04 L886.01,644.55 L884.95,644.23 L884.18,644.38 L883.33,645.08 L882.43,644.90 L881.91,643.92 L881.26,643.49 L880.16,643.38 L879.65,642.61 L879.97,641.55 L879.82,640.78 L879.12,639.93 L879.30,639.03 L880.28,638.51 L880.71,637.86 L880.82,636.76 L881.59,636.25 L882.65,636.57 L883.42,636.42 L884.27,635.72 L885.17,635.90 L885.69,636.88 L886.34,637.31 L887.44,637.42 L887.95,638.19 L887.63,639.25 L887.78,640.02 Z M885.90,640.40 A2.1,2.1 0 1 0 881.70,640.40 A2.1,2.1 0 1 0 885.90,640.40 Z" fill="#333" fill-rule="evenodd"/><path d="M881.29,646.50 L881.14,647.16 L880.43,647.50 L880.09,647.95 L879.93,648.72 L879.33,649.02 L878.61,648.68 L878.05,648.69 L877.34,649.04 L876.74,648.76 L876.55,647.99 L876.20,647.56 L875.48,647.23 L875.32,646.57 L875.81,645.95 L875.93,645.40 L875.74,644.64 L876.15,644.10 L876.94,644.10 L877.45,643.85 L877.93,643.22 L878.60,643.21 L879.10,643.83 L879.60,644.07 L880.40,644.05 L880.82,644.57 L880.65,645.35 L880.78,645.89 Z M879.40,646.20 A1.1,1.1 0 1 0 877.20,646.20 A1.1,1.1 0 1 0 879.40,646.20 Z" fill="#333" fill-rule="evenodd"/><path d="M888.48,673.87 L888.30,674.77 L887.32,675.29 L886.89,675.94 L886.78,677.04 L886.01,677.55 L884.95,677.23 L884.18,677.38 L883.33,678.08 L882.43,677.90 L881.91,676.92 L881.26,676.49 L880.16,676.38 L879.65,675.61 L879.97,674.55 L879.82,673.78 L879.12,672.93 L879.30,672.03 L880.28,671.51 L880.71,670.86 L880.82,669.76 L881.59,669.25 L882.65,669.57 L883.42,669.42 L884.27,668.72 L885.17,668.90 L885.69,669.88 L886.34,670.31 L887.44,670.42 L887.95,671.19 L887.63,672.25 L887.78,673.02 Z M885.90,673.40 A2.1,2.1 0 1 0 881.70,673.40 A2.1,2.1 0 1 0 885.90,673.40 Z" fill="#333" fill-rule="evenodd"/><path d="M881.29,679.50 L881.14,680.16 L880.43,680.50 L880.09,680.95 L879.93,681.72 L879.33,682.02 L878.61,681.68 L878.05,681.69 L877.34,682.04 L876.74,681.76 L876.55,680.99 L876.20,680.56 L875.48,680.23 L875.32,679.57 L875.81,678.95 L875.93,678.40 L875.74,677.64 L876.15,677.10 L876.94,677.10 L877.45,676.85 L877.93,676.22 L878.60,676.21 L879.10,676.83 L879.60,677.07 L880.40,677.05 L880.82,677.57 L880.65,678.35 L880.78,678.89 Z M879.40,679.20 A1.1,1.1 0 1 0 877.20,679.20 A1.1,1.1 0 1 0 879.40,679.20 Z" fill="#333" fill-rule="evenodd"/><path d="M888.48,706.87 L888.30,707.77 L887.32,708.29 L886.89,708.94 L886.78,710.04 L886.01,710.55 L884.95,710.23 L884.18,710.38 L883.33,711.08 L882.43,710.90 L881.91,709.92 L881.26,709.49 L880.16,709.38 L879.65,708.61 L879.97,707.55 L879.82,706.78 L879.12,705.93 L879.30,705.03 L880.28,704.51 L880.71,703.86 L880.82,702.76 L881.59,702.25 L882.65,702.57 L883.42,702.42 L884.27,701.72 L885.17,701.90 L885.69,702.88 L886.34,703.31 L887.44,703.42 L887.95,704.19 L887.63,705.25 L887.78,706.02 Z M885.90,706.40 A2.1,2.1 0 1 0 881.70,706.40 A2.1,2.1 0 1 0 885.90,706.40 Z" fill="#333" fill-rule="evenodd"/><path d="M881.29,712.50 L881.14,713.16 L880.43,713.50 L880.09,713.95 L879.93,714.72 L879.33,715.02 L878.61,714.68 L878.05,714.69 L877.34,715.04 L876.74,714.76 L876.55,713.99 L876.20,713.56 L875.48,713.23 L875.32,712.57 L875.81,711.95 L875.93,711.40 L875.74,710.64 L876.15,710.10 L876.94,710.10 L877.45,709.85 L877.93,709.22 L878.60,709.21 L879.10,709.83 L879.60,710.07 L880.40,710.05 L880.82,710.57 L880.65,711.35 L880.78,711.89 Z M879.40,712.20 A1.1,1.1 0 1 0 877.20,712.20 A1.1,1.1 0 1 0 879.40,712.20 Z" fill="#333" fill-rule="evenodd"/></svg>
</body></html>
